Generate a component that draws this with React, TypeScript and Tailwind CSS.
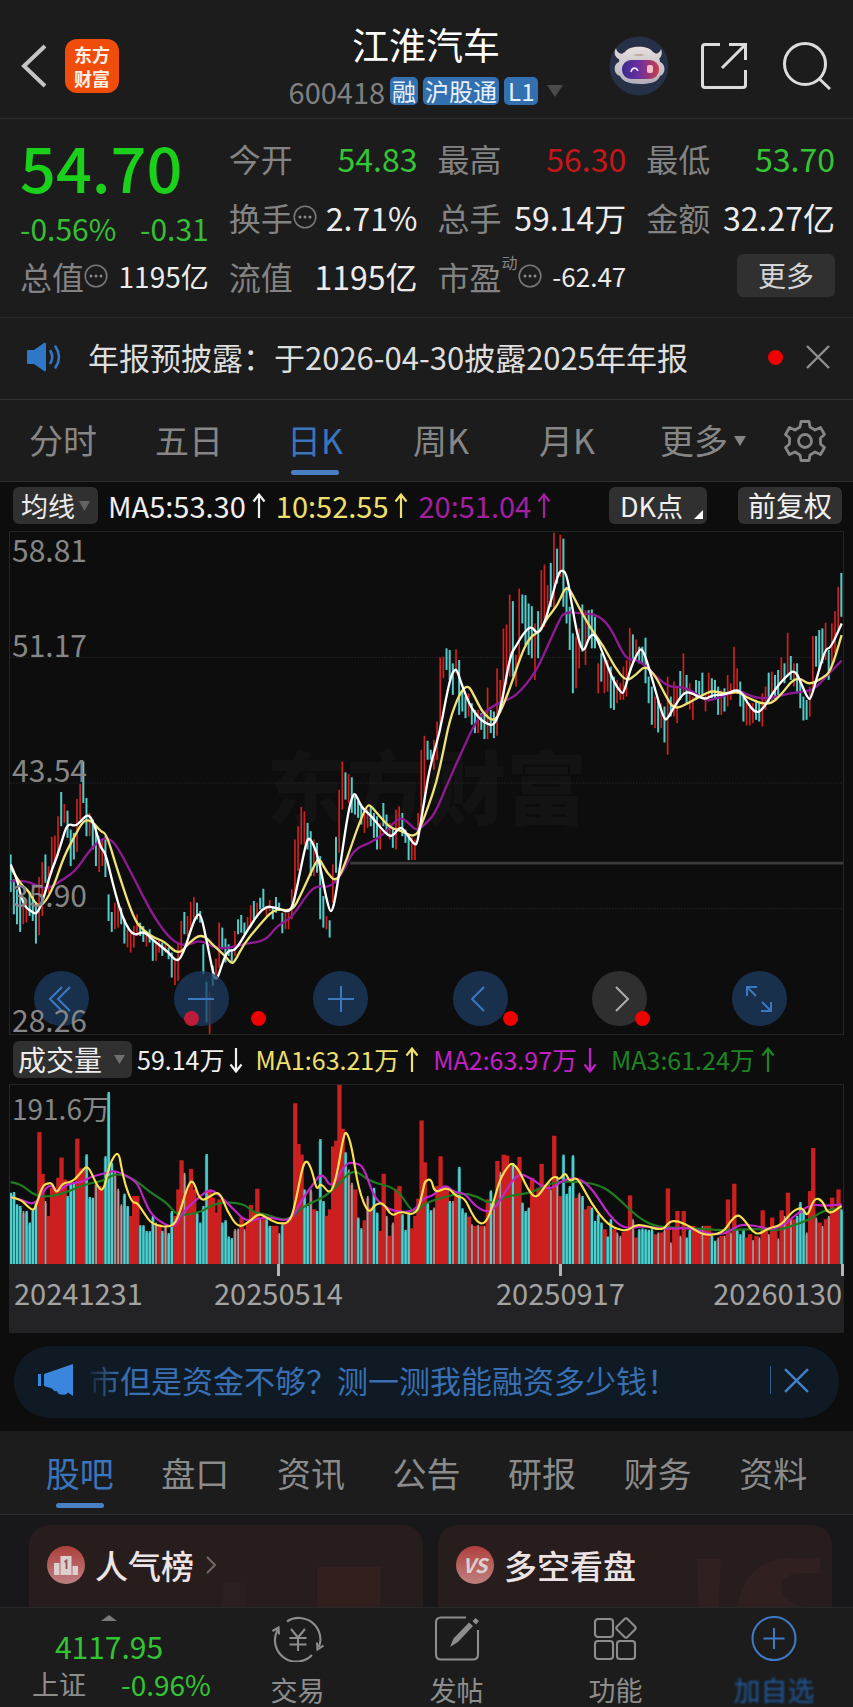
import React from "react";

type Point = [number, number];

/* ---------- chart data (chart units: 3 per pixel column, y grows downwards) ---------- */

const X0 = 30;
const X1 = 2526;

const CANDLES =
  "1005-1118c 1080-1185c 1110-1215c 1130-1238c 1140-1215r 1140-1210r 1120-1190c 1130-1205c 1150-1273c 1073-1248r 1028-1190r 1005-1090c 1040-1120r 952-1060r 948-1035r 890-1010r 817-920c 853-910r 873-955c 930-1040c 940-1020c 838-998r 793-900r 725-850c 835-950c 880-950r 900-990c 920-1040c 950-1058r 960-1040r 950-1073c 1125-1205c 1178-1238c 1150-1230r 1158-1225r 1165-1215c 1200-1273c 1230-1285r 1240-1300r 1220-1285r 1185-1250r 1210-1250c 1220-1268c 1235-1282r 1230-1270c 1260-1325c 1265-1325r 1260-1300r 1270-1310c 1275-1300r 1285-1320c 1300-1375c 1320-1398r 1270-1385r 1205-1310r 1178-1245c 1190-1250r 1148-1235r 1133-1210r 1150-1200c 1175-1210c 1275-1365c 1388-1510c 1420-1545r 1340-1400c 1318-1375r 1210-1345r 1225-1290c 1258-1330c 1275-1310c 1290-1330c 1235-1310r 1200-1245c 1187-1240c 1210-1245c 1193-1235r 1158-1225r 1145-1200c 1150-1195r 1135-1170c 1108-1165c 1160-1190r 1142-1175r 1165-1200c 1133-1180c 1150-1175c 1180-1242c 1170-1230r 1180-1230r 1110-1200r 960-1145r 920-1055r 862-975r 875-975r 910-990c 935-1070c 960-1070r 970-1060c 1010-1200c 1130-1225c 1190-1230r 1203-1255c 1035-1150r 952-1060c 810-1000r 725-870r 758-840c 763-850r 773-880c 830-885c 845-895c 860-915c 880-940r 868-925r 860-920c 880-955c 890-990c 910-990r 850-920c 885-940c 910-960r 925-985c 870-990r 860-930r 880-950c 930-970c 945-1022c 950-1022r 960-1022r 880-960r 690-905r 648-850r 663-720c 690-720c 660-750r 605-720r 412-630r 410-475r 385-450c 390-480c 430-525c 388-460r 420-585c 510-575c 530-595c 520-590r 550-615c 570-640c 570-640r 580-630c 585-658c 503-658r 570-640c 575-655c 445-648r 480-580r 325-550r 313-495r 223-470r 243-470c 405-500r 205-420r 223-310c 225-375c 250-405c 258-415c 310-480r 273-415c 150-330r 133-320r 195-280r 128-260c 37-270r 85-190c 43-170r 55-260c 200-310c 260-390c 340-520c 350-505r 325-445r 253-395c 270-435r 270-355c 268-385c 290-385c 430-520r 400-485c 420-520r 420-515r 440-565c 470-570c 480-550r 490-540r 440-540r 420-530r 323-450r 343-430c 358-415r 380-430c 380-430c 353-490c 470-550c 500-615c 530-625r 540-638c 550-625r 560-668c 470-705r 530-590c 485-590r 500-610r 453-540c 400-520r 465-550c 490-570r 530-600r 480-540c 483-535c 458-530c 520-575r 458-545r 475-535c 480-540c 500-585c 510-585r 505-575c 465-560r 490-540r 380-510r 445-520r 485-560c 515-605c 540-617r 550-617r 550-610r 540-600c 545-605c 520-620r 500-570r 458-550c 455-545r 465-540c 450-525c 412-490r 430-490c 338-470r 408-480c 430-500r 430-520c 480-565c 530-602c 540-600c 500-590r 348-510r 348-440c 330-450c 325-430c 308-420r 390-480c 310-440r 273-400r 200-340r 158-290c";

const VOLUMES =
  "490c 488c 525c 530c 545g 545c 580c 540c 515c 307r 433r 515g 560r 475r 475r 445r 384r 450r 500c 460c 460c 327r 417r 417r 374c 503c 505c 460g 470r 475r 380c 186c 400c 425g 478g 525g 493c 530c 560r 500r 500r 588c 588c 605c 606c 560c 580g 585r 605c 590g 612c 545c 560r 480r 392r 430g 480r 418r 480r 550c 580c 530c 373c 480r 505r 550r 510r 580c 573c 622c 627c 600g 598g 565r 600g 580r 527r 545r 478r 570g 570r 570c 590c 590r 590r 612g 585c 583r 578r 560r 220r 343r 375r 480c 530c 480g 540r 545c 328c 515c 560r 540r 350r 333r 165r 297r 368c 420g 460g 480r 565c 597c 573r 500g 535r 475c 550c 605r 433r 560g 620r 580g 480r 470r 555c 602c 550c 597r 560r 508r 272r 398r 520c 543c 535g 470r 380r 470r 470r 515c 515g 500r 412c 537c 550c 562r 585g 590r 587g 590r 590g 510r 483c 520g 394r 427g 375r 378r 410r 400c 410r 382r 520c 545c 535c 445r 505r 475r 403r 465r 460r 480g 318r 440g 500r 375c 493c 470c 377c 505r 490g 500c 540r 530r 535c 575c 555c 580c 600r 622c 570c 600r 610g 620g 608r 600r 498r 570g 625r 600c 598c 600c 602c 600c 615r 610g 610r 600g 477r 640g 600r 545r 620g 545r 625c 600c 590r 600r 605r 590g 590r 590r 620c 635c 625g 620r 620g 510r 610g 463r 600c 615c 600c 625r 615r 633g 620r 625g 543r 600r 615g 565r 600r 628g 543r 560g 490r 570g 570r 560c 518c 545c 610g 485r 355r 565g 580r 590g 570r 560g 505r 540r 480r 540c";

/* The second half of each line is stored relative to x = 1269. */
const HALF = 1269;

const MA5: [string, string] = [
  "30,1035 50,1080 60,1130 75,1165 95,1178 108,1185 125,1150 150,1060 170,1010 185,960 200,912 225,920 240,905 265,880 285,925 300,985 315,1000 335,1085 355,1160 375,1215 400,1250 430,1235 455,1260 480,1280 505,1300 530,1330 550,1300 575,1220 590,1186 602,1185 620,1270 640,1370 648,1382 656,1365 670,1320 685,1292 705,1295 740,1235 790,1160 830,1165 870,1182 885,1130 905,1030 920,962 928,955 945,985 960,1040 975,1120 988,1175 996,1175 1005,1140 1020,1040 1045,870 1060,822 1068,826 1085,865 1110,885 1150,935 1175,955 1200,920 1215,935 1244,978 1252,970 1262,910 1275,830 1290,740",
  "50,640 70,530 85,465 96,448 102,450 115,490 140,555 165,592 190,612 215,618 235,560 262,405 280,378 300,342 325,316 345,345 365,310 385,240 405,165 416,148 432,160 450,270 465,350 478,390 486,388 500,350 515,340 535,385 570,480 596,520 604,518 625,440 650,388 660,388 675,430 695,500 724,600 734,598 755,560 785,515 810,520 845,540 870,525 905,525 950,505 975,550 1000,580 1020,570 1060,505 1090,470 1118,447 1140,500 1158,538 1166,536 1190,450 1210,385 1225,385 1258,310",
];
const MA10: [string, string] = [
  "30,1045 60,1095 85,1115 108,1160 130,1155 160,1100 190,1010 225,945 250,900 275,905 300,935 318,943 350,1050 400,1200 430,1235 465,1258 490,1265 535,1308 565,1270 605,1242 640,1280 670,1305 692,1332 702,1330 730,1275 775,1220 825,1165 875,1178 905,1120 950,1020 960,1020 980,1060 1010,1090 1040,1020 1070,930 1100,857 1112,858 1130,880 1170,925 1200,932 1245,955 1265,915 1285,860",
  "40,790 60,700 80,600 110,520 135,493 155,530 180,580 215,608 240,560 270,480 300,390 325,348 350,335 375,290 405,255 425,205 440,205 460,245 500,320 545,382 575,440 610,485 640,465 668,435 700,470 730,530 755,570 800,548 840,525 870,512 905,522 950,515 975,535 1040,558 1080,520 1110,480 1135,475 1160,495 1200,475 1225,455 1258,345",
];
const MA20: [string, string] = [
  "30,1085 70,1083 100,1095 140,1110 180,1085 225,1055 265,995 300,960 325,955 350,980 400,1075 450,1175 500,1250 540,1278 570,1275 600,1262 640,1285 680,1288 740,1272 795,1265 830,1220 875,1195 910,1140 945,1098 990,1105 1025,1065 1060,990 1110,970 1150,945 1190,900 1210,895 1250,935",
  "0,920 35,885 70,800 110,710 160,600 200,565 235,545 280,530 340,455 380,365 410,300 425,275 480,280 520,283 560,315 600,400 620,420 650,420 700,470 740,502 780,500 820,520 850,545 900,530 945,510 1000,535 1050,535 1100,520 1150,515 1180,505 1220,460 1258,422",
];
const VOL_MA1: [string, string] = [
  "30,503 60,510 80,530 98,545 108,525 125,470 140,462 155,460 168,495 185,460 215,458 240,430 262,405 285,460 308,492 325,410 345,372 356,374 362,410 375,470 395,520 410,520 430,550 455,587 515,595 535,560 560,475 577,446 600,518 630,500 658,485 680,545 715,598 750,575 775,552 800,565 830,583 870,582 890,500 905,420 918,388 935,420 950,485 962,458 990,498 1010,440 1028,330 1038,300 1055,350 1075,480 1105,555 1125,525 1150,520 1175,562 1200,545 1250,560 1270,480",
  "5,455 25,447 35,492 75,472 100,502 125,505 145,550 165,580 185,585 205,545 230,450 260,403 272,403 290,425 315,480 340,510 370,465 395,438 410,452 428,427 440,457 460,442 480,472 505,520 545,575 580,600 615,605 635,588 660,587 720,605 740,576 765,575 800,590 845,620 900,612 925,575 945,555 965,570 1000,622 1040,595 1075,590 1110,545 1140,533 1155,565 1175,505 1200,512 1218,558 1258,530",
];
const VOL_MA2: [string, string] = [
  "30,503 60,510 100,528 125,490 150,462 170,492 200,462 240,460 275,440 320,430 345,422 410,455 430,510 455,560 500,590 525,592 545,550 600,500 630,478 660,500 700,540 740,580 800,560 870,580 905,510 935,470 965,426 995,482 1035,400 1065,400 1090,410 1120,500 1150,530 1180,545 1240,550",
  "0,505 30,500 65,463 95,490 125,490 160,535 205,552 240,500 285,428 330,450 380,485 420,450 470,445 510,480 560,560 605,600 660,590 730,600 800,595 860,615 910,615 950,585 1000,590 1060,605 1130,550 1165,525 1210,530 1258,525",
];
const VOL_MA3: [string, string] = [
  "30,458 60,462 105,502 170,500 260,462 310,455 345,430 400,447 450,490 500,520 530,560 600,550 650,518 730,522 760,550 800,555 860,578 910,530 970,505 1010,470 1060,416 1110,458 1190,475 1230,540 1250,550",
  "0,525 40,510 115,490 160,500 205,525 250,500 330,490 380,460 450,455 530,465 580,500 640,560 700,595 800,595 900,605 1000,598 1060,605 1110,590 1165,570 1200,545 1258,535",
];

const parse = (text: string, dx: number): Point[] =>
  text.split(" ").map((pair) => {
    const [x, y] = pair.split(",").map(Number);
    return [x + dx, y];
  });

/** Smooths a poly-line with quadratic segments through the midpoints. */
function smooth([left, right]: [string, string]): string {
  const pts = [...parse(left, 0), ...parse(right, HALF)];
  let d = `M${pts[0][0]} ${pts[0][1]}`;
  for (let i = 1; i < pts.length - 1; i++) {
    const mx = (pts[i][0] + pts[i + 1][0]) / 2;
    const my = (pts[i][1] + pts[i + 1][1]) / 2;
    d += `Q${pts[i][0]} ${pts[i][1]} ${mx} ${my}`;
  }
  const last = pts[pts.length - 1];
  return `${d}L${last[0]} ${last[1]}`;
}

function PriceChart() {
  const rows = CANDLES.split(" ");
  const step = (X1 - X0) / (rows.length - 1);
  return (
    <svg viewBox="28 35 2503 1510" preserveAspectRatio="none" className="absolute inset-0 h-full w-full" role="img" aria-label="日K线图">
      <g stroke="#262626" strokeWidth="3" strokeDasharray="5 4">
        <path d="M28 412H2531M28 790H2531M28 1168H2531" />
      </g>
      <path d="M1050 1031H2531" stroke="#3b3b3b" strokeWidth="8" />
      {rows.map((row, i) => {
        const [top, bottom] = row.slice(0, -1).split("-").map(Number);
        const up = row.endsWith("r");
        return (
          <rect
            key={i}
            x={X0 + i * step - (up ? 2.5 : 3)}
            y={top}
            width={up ? 5 : 6}
            height={bottom - top}
            fill={up ? "#d0211e" : "#55cbc9"}
          />
        );
      })}
      <g fill="none" strokeLinejoin="round" strokeWidth="7">
        <path d={smooth(MA20)} stroke="#8f1a93" />
        <path d={smooth(MA10)} stroke="#f0e275" />
        <path d={smooth(MA5)} stroke="#ffffff" />
      </g>
    </svg>
  );
}

function VolumeChart() {
  const rows = VOLUMES.split(" ");
  const step = (X1 - X0) / (rows.length - 1);
  return (
    <svg viewBox="28 165 2503 540" preserveAspectRatio="none" className="absolute inset-0 h-full w-full" role="img" aria-label="成交量图">
      {rows.map((row, i) => {
        const top = Number(row.slice(0, -1));
        const kind = row.slice(-1);
        const x = X0 + i * step;
        const height = 705 - top;
        if (kind === "r") {
          return <rect key={i} x={x - 5.5} y={top} width="13" height={height} fill="#cc1f1f" />;
        }
        if (kind === "g") {
          return (
            <g key={i}>
              <rect x={x - 5} y={top + 6} width="10" height={height - 6} fill="#7d4144" />
              <rect x={x - 2} y={top} width="5" height={height} fill="#b09a9a" />
            </g>
          );
        }
        return (
          <g key={i}>
            <rect x={x - 5} y={top + 6} width="10" height={height - 6} fill="#1c6e70" />
            <rect x={x - 3} y={top} width="7" height={height} fill="#4fcfce" />
          </g>
        );
      })}
      <g fill="none" strokeLinejoin="round" strokeWidth="6.5">
        <path d={smooth(VOL_MA3)} stroke="#1f7a22" />
        <path d={smooth(VOL_MA2)} stroke="#c026c8" />
        <path d={smooth(VOL_MA1)} stroke="#fbe04f" />
      </g>
    </svg>
  );
}

/* ---------- small pieces ---------- */

function Arrow({ down = false }: { down?: boolean }) {
  return (
    <svg viewBox="0 0 14 28" className="h-7 w-3.5 shrink-0" fill="none" stroke="currentColor" strokeWidth="2.2" aria-hidden="true">
      {down ? <path d="M7 2V25M1.5 18.5L7 25.5L12.5 18.5" /> : <path d="M7 26V3M1.5 9.5L7 2.5L12.5 9.5" />}
    </svg>
  );
}

function Caret({ className }: { className: string }) {
  return (
    <svg viewBox="0 0 10 10" className={className} preserveAspectRatio="none" fill="currentColor" aria-hidden="true">
      <path d="M0 0H10L5 10Z" />
    </svg>
  );
}

function Info() {
  return (
    <svg viewBox="0 0 24 24" className="h-6 w-6 shrink-0" fill="none" stroke="#77777a" strokeWidth="1.6" aria-hidden="true">
      <circle cx="12" cy="12" r="10.8" />
      <g fill="#8a8a8c" stroke="none">
        <circle cx="7" cy="12" r="1.5" />
        <circle cx="12" cy="12" r="1.5" />
        <circle cx="17" cy="12" r="1.5" />
      </g>
    </svg>
  );
}

function Cross({ className }: { className: string }) {
  return (
    <svg viewBox="0 0 24 24" className={className} fill="none" stroke="currentColor" strokeWidth="2.4" aria-hidden="true">
      <path d="M1 1L23 23M23 1L1 23" />
    </svg>
  );
}

function Robot() {
  return (
    <svg viewBox="0 0 60 60" className="h-[60px] w-[60px]" aria-hidden="true">
      <defs>
        <linearGradient id="visor" x1="0" x2="1">
          <stop offset="0" stopColor="#3b2a8f" />
          <stop offset="0.45" stopColor="#6a2f9e" />
          <stop offset="1" stopColor="#c8404f" />
        </linearGradient>
        <linearGradient id="helmet" x1="0" x2="0" y1="0" y2="1">
          <stop offset="0" stopColor="#e6e0df" />
          <stop offset="1" stopColor="#b3adba" />
        </linearGradient>
      </defs>
      <circle cx="30" cy="30" r="29.5" fill="#263148" />
      <path d="M7 12C4 17 6 23 13 24L18 17C12 19 8 17 7 12ZM52 13C54 18 52 23 47 24L42 17C47 19 51 17 52 13Z" fill="#d6d0d3" />
      <path d="M16 16C20 9 40 9 44 16C50 19 51 24 51 26C57 28 57 38 51 40C49 46 42 48 31 48C20 48 13 45 11 40C4 38 4 28 10 26C10 22 12 18 16 16Z" fill="url(#helmet)" />
      <path d="M24 19C27 18 33 18 36 19C33 20 27 20 24 19Z" fill="#b99c82" />
      <rect x="13" y="24" width="37" height="19" rx="9" fill="url(#visor)" />
      <path d="M22 36C23 31 27 31 29 35" fill="none" stroke="#e7e2ff" strokeWidth="1.6" />
      <rect x="38" y="29" width="6" height="8" rx="2" fill="#f3bfc8" />
    </svg>
  );
}

/* ---------- sections ---------- */

function Header() {
  return (
    <header className="grid grid-cols-[1fr_auto_1fr] items-center border-b border-[#2e2e2e] pt-[22px] pr-[22px] pb-[9px] pl-[21px]">
      <div className="flex items-center gap-[18px]">
        <button type="button" aria-label="返回" className="text-[#c4c4c4]">
          <svg viewBox="0 0 26 44" className="h-11 w-[26px]" fill="none" stroke="currentColor" strokeWidth="4">
            <path d="M24 2L3 22L24 42" />
          </svg>
        </button>
        <div className="flex h-[54px] w-[54px] flex-col items-center justify-center rounded-xl bg-[#f04d0c] text-[18px] leading-6 font-bold text-[#fff3e6]">
          <span>东方</span>
          <span>财富</span>
        </div>
      </div>
      <div className="flex flex-col items-center pb-1">
        <h1 className="text-[37px] leading-[44px] text-white">江淮汽车</h1>
        <div className="mt-[11px] flex h-7 items-center gap-[5px] text-[24px] leading-7 text-[#e8f1fb]">
          <span className="text-[29px] text-[#808080]">600418</span>
          <span className="rounded-[5px] bg-[#3370b0] px-0.5">融</span>
          <span className="rounded-[5px] bg-[#3370b0] px-0.5">沪股通</span>
          <span className="rounded-[5px] bg-[#3370b0] px-1">L1</span>
          <Caret className="ml-1 h-3 w-4 text-[#4a4a4a]" />
        </div>
      </div>
      <div className="flex items-center justify-end">
        <button type="button" aria-label="智能助手" className="mr-8">
          <Robot />
        </button>
        <button type="button" aria-label="分享" className="mr-9">
          <svg viewBox="0 0 46 46" className="h-[46px] w-[46px]" fill="none" stroke="#dcdcdc" strokeWidth="3">
            <path d="M19 1.5H4C2.3 1.5 1.5 2.3 1.5 4V42C1.5 43.7 2.3 44.5 4 44.5H42C43.7 44.5 44.5 43.7 44.5 42V27" />
            <path d="M28 1.5H44.5V17M44 2L21 25" />
          </svg>
        </button>
        <button type="button" aria-label="搜索">
          <svg viewBox="0 0 48 48" className="h-12 w-12" fill="none" stroke="#dcdcdc" strokeWidth="3">
            <circle cx="22" cy="22" r="20.5" />
            <path d="M36.5 37L47 47" />
          </svg>
        </button>
      </div>
    </header>
  );
}

function Quote() {
  const cell = "flex items-center justify-between whitespace-nowrap";
  const label = "flex items-center text-[#838383]";
  return (
    <section className="grid auto-rows-[59px] grid-cols-4 gap-x-5 border-b border-[#292929] pt-[9px] pr-[18px] pb-3 pl-5 text-[32px] leading-[44px] text-[#ececec]">
      <div className="row-span-2 flex flex-col">
        <strong className="mt-1.5 text-[63px] leading-[64px] font-medium text-[#1bd01b]">54.70</strong>
        <span className="mt-2 flex justify-between text-[30px] text-[#35bf35]">
          <span>-0.56%</span>
          <span>-0.31</span>
        </span>
      </div>
      <div className={cell}><span className={label}>今开</span><span className="text-[#35c435]">54.83</span></div>
      <div className={cell}><span className={label}>最高</span><span className="text-[#c4171b]">56.30</span></div>
      <div className={cell}><span className={label}>最低</span><span className="text-[#35c435]">53.70</span></div>
      <div className={cell}><span className={label}>换手<Info /></span><span>2.71%</span></div>
      <div className={cell}><span className={label}>总手</span><span>59.14万</span></div>
      <div className={cell}><span className={label}>金额</span><span>32.27亿</span></div>
      <div className={cell}><span className={label}>总值<Info /></span><span className="text-[28px]">1195亿</span></div>
      <div className={cell}><span className={label}>流值</span><span>1195亿</span></div>
      <div className={cell}>
        <span className={label}>市盈<sup className="top-0 self-start text-[16px] leading-4">动</sup><Info /></span>
        <span className="text-[26px]">-62.47</span>
      </div>
      <div className="flex items-center justify-end">
        <button type="button" className="rounded-md bg-[#303030] px-[21px] text-[28px] leading-[43px] text-[#d6d6d6]">更多</button>
      </div>
    </section>
  );
}

function Notice() {
  return (
    <section className="flex items-center border-b border-[#303030] pt-[17px] pr-[23px] pb-5 pl-[26px] text-[31px] leading-[44px] text-[#dedede]">
      <svg viewBox="0 0 36 30" className="h-[30px] w-9 shrink-0" aria-hidden="true">
        <path d="M1 9Q1 8 2 8H8L18 1Q20 0 20 2V28Q20 30 18 29L8 22H2Q1 22 1 21Z" fill="#2f78c8" />
        <g fill="none" stroke="#2f78c8" strokeWidth="2.6" strokeLinecap="round">
          <path d="M24.5 9Q28 15 24.5 21M29.500 4.500Q36.500 15 29.500 25.500" />
        </g>
      </svg>
      <p className="ml-[26px] flex-1 whitespace-nowrap">年报预披露：于2026-04-30披露2025年年报</p>
      <span className="mr-[23px] h-[15px] w-[15px] rounded-full bg-[#f00000]" />
      <button type="button" aria-label="关闭公告" className="text-[#8e8e8e]">
        <Cross className="h-6 w-6" />
      </button>
    </section>
  );
}

const PERIODS = ["分时", "五日", "日K", "周K", "月K"];

function PeriodTabs() {
  return (
    <nav className="grid grid-cols-[repeat(5,126fr)_146fr_77fr] border-b border-[#303030] text-[34px] leading-[44px] text-[#868686]">
      {PERIODS.map((name) => (
        <button key={name} type="button" className={name === "日K" ? "flex flex-col items-center pt-[18px] pb-1.5 text-[#3a75bd]" : "flex flex-col items-center pt-[18px] pb-1.5"}>
          {name}
          <span className={name === "日K" ? "mt-2 h-[5px] w-12 rounded-full bg-[#4a80c4]" : "mt-2 h-[5px] w-12"} />
        </button>
      ))}
      <button type="button" className="flex items-start justify-center gap-1.5 pt-[18px]">
        更多
        <Caret className="mt-[18px] h-2.5 w-3" />
      </button>
      <button type="button" aria-label="图表设置" className="flex items-start pt-5 pl-2">
        <svg viewBox="0 0 42 42" className="h-[42px] w-[42px]" fill="none" stroke="currentColor" strokeWidth="2.8" strokeLinejoin="round">
          <path d="M17 1.500H25L26 7L31 10L36.500 7.500L40.500 14.500L36.500 18V24L40.500 27.500L36.500 34.500L31 32L26 35L25 40.500H17L16 35L11 32L5.500 34.500L1.500 27.500L5.500 24V18L1.500 14.500L5.500 7.500L11 10L16 7Z" />
          <circle cx="21" cy="21" r="6.500" />
        </svg>
      </button>
    </nav>
  );
}

function Dot({ className }: { className: string }) {
  return <span className={`absolute h-[15px] w-[15px] rounded-full ${className}`} />;
}

function ChartSection() {
  const round = "relative flex h-[55px] w-[55px] items-center justify-center rounded-full bg-[#1d3c62]/75 text-[#3b78c2]";
  const icon = { viewBox: "0 0 30 30", className: "h-[30px] w-[30px]", fill: "none", stroke: "currentColor", strokeWidth: 2 };
  return (
    <section className="bg-[#0d0d0d] px-[9px] pb-[13px]">
      <div className="flex items-center pt-[5px] pr-0.5 pb-[7px] pl-1 text-[29px] leading-[37px] whitespace-nowrap">
        <button type="button" className="flex items-center rounded-md bg-[#303030] pr-2 pl-2 text-[27px] text-[#ececec]">
          均线<Caret className="ml-1 h-2.5 w-[11px] text-[#636363]" />
        </button>
        <span className="ml-2.5 flex items-center gap-1.5 text-[#f0f0f0]">MA5:53.30 <Arrow /></span>
        <span className="ml-2.5 flex items-center gap-1.5 text-[#efe06c]">10:52.55 <Arrow /></span>
        <span className="ml-2.5 flex items-center gap-1.5 text-[#a0209f]">20:51.04 <Arrow /></span>
        <span className="flex-1" />
        <button type="button" className="relative rounded-md bg-[#303030] pr-6 pl-[11px] text-[27px] text-[#f0f0f0]">
          DK点
          <svg viewBox="0 0 9 9" className="absolute right-1 bottom-[5px] h-[9px] w-[9px]" fill="#fff" aria-hidden="true">
            <path d="M9 0V9H0Z" />
          </svg>
        </button>
        <button type="button" className="ml-[31px] rounded-md bg-[#303030] px-2.5 text-[28px] text-[#f0f0f0]">前复权</button>
      </div>

      <div className="relative h-[504px] border border-[#262626]">
        <div className="absolute inset-0 flex items-center justify-center text-[80px] leading-none font-black text-[#131313]">东方财富</div>
        <PriceChart />
        <div className="absolute inset-x-0 bottom-2 flex justify-between pr-14 pl-6">
          <button type="button" aria-label="最左" className={round}>
            <svg {...icon}><path d="M15 3L3 15L15 27M23 3L11 15L23 27" /></svg>
          </button>
          <button type="button" aria-label="缩小" className={round}>
            <svg {...icon}><path d="M2 15H28" /></svg>
            <Dot className="bottom-0 left-2.5 bg-[#d01c38]/90" />
            <Dot className="bottom-0 left-[77px] bg-[#f00000]" />
          </button>
          <button type="button" aria-label="放大" className={round}>
            <svg {...icon}><path d="M2 15H28M15 2V28" /></svg>
          </button>
          <button type="button" aria-label="向左" className={round}>
            <svg {...icon}><path d="M19 3L7 15L19 27" /></svg>
            <Dot className="bottom-0 left-[50px] bg-[#f00000]" />
          </button>
          <button type="button" aria-label="向右" className="relative flex h-[55px] w-[55px] items-center justify-center rounded-full bg-[#2f2f2f] text-[#adadad]">
            <svg {...icon}><path d="M11 3L23 15L11 27" /></svg>
            <Dot className="bottom-0 left-[43px] bg-[#f00000]" />
          </button>
          <button type="button" aria-label="全屏" className={round}>
            <svg {...icon}><path d="M3 12V3H13M3 3L12 12M27 18V27H17M27 27L18 18" /></svg>
          </button>
        </div>
        <div className="pointer-events-none absolute inset-0 grid grid-rows-4 pb-0.5 pl-0.5 text-[30px] leading-[26px] text-[#868686]">
          <span className="flex flex-col justify-between pt-1"><span>58.81</span><span>51.17</span></span>
          <span className="flex items-end">43.54</span>
          <span className="flex items-end">35.90</span>
          <span className="flex items-end">28.26</span>
        </div>
      </div>

      <div className="flex items-center pt-1.5 pb-1.5 pl-1 text-[25px] leading-[37px] whitespace-nowrap">
        <button type="button" className="flex items-center rounded-md bg-[#303030] pr-[7px] pl-[5px] text-[28px] text-[#ececec]">
          成交量<Caret className="ml-3 h-[9px] w-[11px] text-[#707070]" />
        </button>
        <span className="ml-[5px] flex items-center gap-[5px] text-[#f0f0f0]">59.14万 <Arrow down /></span>
        <span className="ml-3 flex items-center gap-1.5 text-[#efe06c]">MA1:63.21万 <Arrow /></span>
        <span className="ml-3.5 flex items-center gap-1.5 text-[#c31fc6]">MA2:63.97万 <Arrow down /></span>
        <span className="ml-3.5 flex items-center gap-1.5 text-[#1e8422]">MA3:61.24万 <Arrow /></span>
      </div>

      <div className="relative h-[180px] border border-b-0 border-[#262626]">
        <VolumeChart />
        <span className="absolute top-[5px] left-0.5 text-[28px] leading-9 text-[#868686]">191.6万</span>
      </div>
      <div className="grid grid-cols-[200fr_282fr_348fr] items-start bg-[#232325] pb-[25px] pl-[5px] text-[29px] leading-8 text-[#a3a3a3]">
        <span className="pt-3">20241231</span>
        <span className="flex w-fit flex-col items-center"><i className="h-3 w-[3px] bg-[#b4b4b4]" />20250514</span>
        <span className="flex justify-between">
          <span className="flex w-fit flex-col items-center"><i className="h-3 w-[3px] bg-[#b4b4b4]" />20250917</span>
          <span className="flex w-fit flex-col items-end"><i className="h-3 w-[3px] bg-[#b4b4b4]" /><span className="pr-0.5">20260130</span></span>
        </span>
      </div>
    </section>
  );
}

function Promo() {
  return (
    <section className="bg-[#0d0d0d] px-3.5 pb-[13px]">
      <div className="flex items-center rounded-full bg-[#101a24] pt-3 pr-[30px] pb-4 pl-6 text-[31px] leading-[44px] text-[#396fb3]">
        <svg viewBox="0 0 36 32" className="h-8 w-9 shrink-0" fill="#3a86dd" aria-hidden="true">
          <path d="M0 10H3V22H0ZM6 10L35 0V32L30 28.500Q28 31.500 24 30.500Q20 31 19 27Q16 28 14 24.500L6 22Z" />
        </svg>
        <a href="#margin" className="ml-[15px] flex-1 overflow-hidden whitespace-nowrap">
          <span className="bg-linear-to-r from-[#18283c] to-[#396fb3] bg-clip-text text-transparent">市</span>但是资金不够？测一测我能融资多少钱！
        </a>
        <span className="mr-[13px] h-7 w-px bg-[#34618f]" />
        <button type="button" aria-label="关闭广告" className="text-[#4180c8]">
          <Cross className="h-[25px] w-[25px]" />
        </button>
      </div>
    </section>
  );
}

const TABS = ["股吧", "盘口", "资讯", "公告", "研报", "财务", "资料"];

function ContentTabs() {
  return (
    <nav className="grid grid-cols-7 border-b border-[#2b2b2c] px-[22px] text-[34px] leading-[44px] text-[#8b8b8b]">
      {TABS.map((name, i) => (
        <button key={name} type="button" className={i === 0 ? "flex flex-col items-center pt-5 pb-1.5 text-[#3a75bd]" : "flex flex-col items-center pt-5 pb-1.5"}>
          {name}
          <span className={i === 0 ? "mt-2 h-[5px] w-12 rounded-full bg-[#4a80c4]" : "mt-2 h-[5px] w-12"} />
        </button>
      ))}
    </nav>
  );
}

function Cards() {
  const card = "relative flex items-center overflow-hidden rounded-t-[20px] bg-[#271d1d] pt-[17px] pb-[19px] pl-[18px] text-[33px] leading-[46px] font-medium text-[#ece4e4]";
  return (
    <section className="grid grid-cols-2 gap-[15px] bg-[#18181a] pt-2.5 pr-[21px] pl-[29px]">
      <a href="#rank" className={card}>
        <svg viewBox="0 0 390 82" className="absolute inset-0 h-full w-full" preserveAspectRatio="none" aria-hidden="true">
          <path d="M285 42H348V82H285Z" fill="#32201f" />
          <path d="M190 58H214V82H190Z" fill="#2b1f1f" />
        </svg>
        <svg viewBox="0 0 38 38" className="relative h-[38px] w-[38px]" aria-hidden="true">
          <defs>
            <linearGradient id="badge" x1="0" x2="0" y1="0" y2="1">
              <stop offset="0" stopColor="#ae3f3c" />
              <stop offset="1" stopColor="#bd8080" />
            </linearGradient>
          </defs>
          <circle cx="19" cy="19" r="19" fill="url(#badge)" />
          <path d="M7 17H12.500V29H7ZM13.500 10H24.500V29H13.500ZM25.500 20H31V29H25.500Z" fill="#dccfcf" />
          <path d="M17.500 16L19.500 14.500V23" fill="none" stroke="#985050" strokeWidth="1.800" />
        </svg>
        <span className="relative ml-2.5">人气榜</span>
        <svg viewBox="0 0 10 18" className="relative ml-3 h-[18px] w-2.5" fill="none" stroke="#6f6868" strokeWidth="2" aria-hidden="true">
          <path d="M1 1L9 9L1 17" />
        </svg>
      </a>
      <a href="#long-short" className={card}>
        <svg viewBox="0 0 390 82" className="absolute inset-0 h-full w-full" preserveAspectRatio="none" aria-hidden="true">
          <path d="M256 34H280L278 82H258ZM296 82Q304 34 350 33H378V48H358Q338 50 340 66Q344 76 362 82Z" fill="#302020" />
        </svg>
        <span className="relative flex h-[38px] w-[38px] items-center justify-center rounded-full bg-linear-to-b from-[#ae3f3c] to-[#bd8080] text-[20px] leading-5 font-bold text-[#dccfcf] italic">VS</span>
        <span className="relative ml-2.5">多空看盘</span>
      </a>
    </section>
  );
}

function BottomBar() {
  const item = "flex flex-col items-center pt-2";
  const icon = { viewBox: "0 0 52 46", className: "h-[46px] w-[52px]", fill: "none", stroke: "currentColor", strokeWidth: 2.1 };
  return (
    <footer className="grid grid-cols-[218fr_159fr_159fr_159fr_158fr] border-t border-[#282828] pb-0.5 text-[27px] leading-8 text-[#8d8d8d]">
      <button type="button" className="flex flex-col items-center pt-[7px]">
        <svg viewBox="0 0 16 6" className="h-1.5 w-4" fill="#7a7a7a" aria-hidden="true">
          <path d="M8 0L16 6H0Z" />
        </svg>
        <span className="mt-[7px] text-[30px] leading-9 text-[#33c433]">4117.95</span>
        <span className="mt-0.5 ml-8 flex gap-[35px] self-start leading-9">上证 <span className="text-[28px] text-[#33c433]">-0.96%</span></span>
      </button>
      <button type="button" className={item}>
        <svg {...icon}>
          <path d="M15 5.500A21.500 21.500 0 0 1 47 31M51.500 29.500L45.500 33.500L45 26.500M40 39A21.500 21.500 0 0 1 5.500 14M0.500 15L6.500 11.500L7 18.500" />
          <path d="M19 13L26 21.500L33 13M17.500 22H34.500M17.500 28.500H34.500M26 21.500V35" />
        </svg>
        <span className="mt-3">交易</span>
      </button>
      <button type="button" className={item}>
        <svg {...icon}>
          <path d="M35 1.500H10Q5 1.500 5 6.500V38.500Q5 43.500 10 43.500H42Q47 43.500 47 38.500V14" />
          <path d="M19 31L22.500 22.500L38 6.500L42 10L27 26Z" fill="currentColor" stroke="none" />
          <path d="M41.500 5L44.500 2L48 5L45 8.500Z" fill="currentColor" stroke="none" />
        </svg>
        <span className="mt-3">发帖</span>
      </button>
      <button type="button" className={item}>
        <svg {...icon}>
          <rect x="5" y="3" width="18" height="18" rx="3" />
          <rect x="5" y="25" width="18" height="18" rx="3" />
          <rect x="27" y="25" width="18" height="18" rx="3" />
          <path d="M34.500 3Q36 1.500 37.500 3L45 10.500Q46.500 12 45 13.500L37.500 21Q36 22.500 34.500 21L27 13.500Q25.500 12 27 10.500Z" />
        </svg>
        <span className="mt-3">功能</span>
      </button>
      <button type="button" className={`${item} text-[#3f79c4]`}>
        <svg {...icon}>
          <circle cx="26" cy="22.500" r="21.500" />
          <path d="M15.500 22.500H36.500M26 12V33" />
        </svg>
        <span className="mt-3 text-[#1f5a9a] blur-[1px]">加自选</span>
      </button>
    </footer>
  );
}

export default function App() {
  return (
    <main className="min-h-screen w-full overflow-hidden bg-[#1c1c1c] font-['Noto_Sans_CJK_SC',sans-serif]">
      <Header />
      <Quote />
      <Notice />
      <PeriodTabs />
      <ChartSection />
      <Promo />
      <ContentTabs />
      <Cards />
      <BottomBar />
    </main>
  );
}
